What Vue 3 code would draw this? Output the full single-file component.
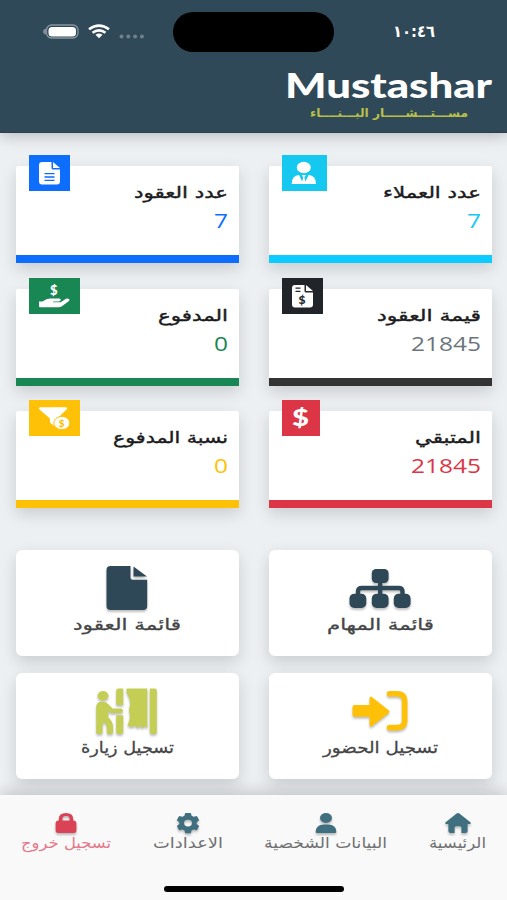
<script setup>
import { h } from "vue";

// One line of text drawn at a fixed width, anchored on its right edge.
const FitText = (props) =>
    h("svg", { width: props.width, height: props.height, fill: "currentColor" }, [
        h(
            "text",
            {
                x: props.width,
                y: props.baseline,
                textLength: props.width,
                lengthAdjust: "spacingAndGlyphs",
            },
            props.text,
        ),
    ]);
FitText.props = ["text", "width", "height", "baseline"];

const stats = [
    { id: "clients", title: "عدد العملاء", titleWidth: 98, value: "7", badge: 45 },
    { id: "contracts", title: "عدد العقود", titleWidth: 94, value: "7", badge: 41 },
    { id: "total", title: "قيمة العقود", titleWidth: 104, value: "21845", badge: 41 },
    { id: "paid", title: "المدفوع", titleWidth: 70, value: "0", badge: 51 },
    { id: "rest", title: "المتبقي", titleWidth: 66, value: "21845", badge: 38 },
    { id: "ratio", title: "نسبة المدفوع", titleWidth: 115, value: "0", badge: 51 },
];

const actions = [
    { id: "tasks", label: "قائمة المهام", width: 107 },
    { id: "list", label: "قائمة العقود", width: 108 },
    { id: "attend", label: "تسجيل الحضور", width: 115 },
    { id: "visit", label: "تسجيل زيارة", width: 93 },
];

const tabs = [
    { id: "home", label: "الرئيسية", width: 57 },
    { id: "profile", label: "البيانات الشخصية", width: 123 },
    { id: "settings", label: "الاعدادات", width: 70 },
    { id: "logout", label: "تسجيل خروج", width: 90 },
];
</script>

<template>
    <div class="screen" dir="rtl">
        <header class="header">
            <div class="status" dir="ltr">
                <svg class="status-icons" width="103" height="18">
                    <path d="M3 5.5Q0 6 0 8.5t3 3z" fill="#7d8c96" />
                    <rect x="3.5" y="2" width="31.5" height="13" rx="5" fill="none" stroke="#8795a0" stroke-width="1.3" />
                    <rect x="5.5" y="4" width="27.5" height="9.5" rx="3.5" fill="#fff" />
                    <g fill="none" stroke="#fff" stroke-width="2.6">
                        <path d="M46 6.3Q56 -1.2 66 6.3" />
                        <path d="M49.5 9.8Q56 4.8 62.5 9.8" />
                    </g>
                    <path d="M52.5 11.7Q56 9.2 59.5 11.7L56 15.3z" fill="#fff" />
                    <g fill="#70818c">
                        <circle cx="78.5" cy="13.5" r="2" />
                        <circle cx="85.3" cy="13.5" r="2" />
                        <circle cx="92.1" cy="13.5" r="2" />
                        <circle cx="98.9" cy="13.5" r="2" />
                    </g>
                </svg>
                <div class="island"></div>
                <FitText class="clock" text="١٠:٤٦" :width="42" :height="20" :baseline="16" />
            </div>
            <div class="brand">
                <FitText class="brand-name" text="Mustashar" :width="207" :height="34" :baseline="30" />
                <FitText class="brand-tag" text="مســـتـــشـــــار البـــنــــاء" :width="158" :height="18" :baseline="14.5" />
            </div>
        </header>

        <main class="content">
            <section class="stats">
                <article v-for="item in stats" :key="item.id" class="stat" :class="item.id">
                    <div class="badge" :style="{ width: item.badge + 'px' }">
                        <svg v-if="item.id === 'clients'" width="45" height="36" fill="#fff">
                            <ellipse cx="21.8" cy="12.5" rx="7" ry="5.8" />
                            <path d="M9.7 29Q9.7 20.5 17 20l3.2 6.5 1-4-1.4-2.5h4l-1.4 2.5 1 4 3.2-6.5q7.4.5 7.4 9z" />
                        </svg>
                        <svg v-else-if="item.id === 'contracts'" width="41" height="36">
                            <path fill="#fff" d="M13 7h9.5v6q0 1.5 1.5 1.5h7v12q0 3-3 3H13q-3 0-3-3V10q0-3 3-3zM24 7l7 6h-7z" />
                            <path d="M15.5 18.7h10M15.5 22h10M15.5 25.3h10" stroke="#0d6efd" stroke-width="1.3" />
                        </svg>
                        <svg v-else-if="item.id === 'total'" width="41" height="36">
                            <path fill="#fff" d="M13 7h9.5v6q0 1.5 1.5 1.5h7v12q0 3-3 3H13q-3 0-3-3V10q0-3 3-3zM24 7l7 6h-7z" />
                            <path d="M13.5 10.2h5M13.5 13.3h5" stroke="#212529" stroke-width="1.3" />
                            <text x="16.5" y="26.2" font-size="12" fill="#212529">$</text>
                        </svg>
                        <svg v-else-if="item.id === 'paid'" width="51" height="36" fill="#fff">
                            <text x="21" y="16.8" font-size="13">$</text>
                            <path d="M10 23.5h3.5q4-3 7.5-3h9q1.7 0 1.7 1.4t-2 1.6h-5.5v.7h7.5l5.3-3.4q1.6-.8 3 .2t-.3 2.3l-6.8 5q-1.4 1-3.5 1H11q-1 0-1-1z" />
                        </svg>
                        <svg v-else-if="item.id === 'rest'" width="38" height="36" fill="#fff">
                            <text x="10" y="25.8" font-size="23" textLength="17" lengthAdjust="spacingAndGlyphs">$</text>
                        </svg>
                        <svg v-else width="51" height="36">
                            <path fill="#fff" d="M11.5 7.3h25q2.5.4 1 2.2L28.8 18q-4.6 3.5-3.3 8l-3.6-2.4q-1-.8-1-2v-3L10.5 9.5q-1.5-1.8 1-2.2z" />
                            <ellipse cx="32.8" cy="23" rx="8" ry="6.6" fill="#fff" stroke="#ffc107" stroke-width="1" />
                            <text x="29.8" y="26.7" font-size="10" fill="#ffc107">$</text>
                        </svg>
                    </div>
                    <FitText class="stat-title" :text="item.title" :width="item.titleWidth" :height="28" :baseline="19.3" />
                    <FitText class="stat-value" :text="item.value" :width="item.value.length * 14" :height="28" :baseline="21" />
                </article>
            </section>

            <section class="actions">
                <article v-for="item in actions" :key="item.id" class="action">
                    <svg v-if="item.id === 'tasks'" class="action-icon" width="62" height="46" fill="#2f4858">
                        <rect x="22.8" y="4" width="16.8" height="14" rx="4.2" />
                        <rect x=".5" y="28.7" width="16.8" height="14.3" rx="4.8" />
                        <rect x="22.8" y="28.7" width="16.8" height="14.3" rx="4.8" />
                        <rect x="44.8" y="28.7" width="16.8" height="14.3" rx="4.8" />
                        <path d="M31.2 16v14M9 30v-3.5q0-3.5 4-3.5h36.5q4 0 4 3.5V30" fill="none" stroke="#2f4858" stroke-width="4.4" />
                    </svg>
                    <svg v-else-if="item.id === 'list'" class="action-icon" width="62" height="46" fill="#2f4858">
                        <path d="M14.5 1h20v11.2q0 2.5 2.5 2.5h14.2V41q0 4-4 4H14.5q-4 0-4-4V5q0-4 4-4z" />
                        <path d="M37.5 1.5 51 11.5H37.5z" />
                    </svg>
                    <svg v-else-if="item.id === 'attend'" class="action-icon" width="62" height="46" fill="#ffc107">
                        <path d="M5.5 17h15v-6.5q0-3 2.7-1.3l16.6 13q1.4 1.3 0 2.8L23.2 38q-2.7 1.7-2.7-1.3v-8h-15q-2 0-2-2V19q0-2 2-2z" />
                        <path d="M40.5 5.8H48q7.6 0 7.6 6.7V33q0 6.6-7.6 6.6h-7.5" fill="none" stroke="#ffc107" stroke-width="5.6" stroke-linecap="round" />
                    </svg>
                    <svg v-else class="action-icon" width="62" height="46" fill="#c4ce54">
                        <ellipse cx="7" cy="7.7" rx="5.5" ry="4.7" />
                        <path d="M.2 19q0-5.3 6-5.3 4 0 6 2.4l4.3 4.4h7.8q2.7 0 2.7 2.3T24.2 25h-9l-2.9-2v6.5q4.8 3.5 4.8 10.5v4.4q0 1.6-1.6 1.6h-3q-1.7 0-1.7-1.6V40q0-4-3.2-6.3-1.1 3-1.1 6.3v4.4Q6.5 46 5 46H1.8Q.2 46 .2 44.4z" />
                        <path d="M22.2.5h5V17h-7V2.3Q20.2.5 22.2.5zM20.2 27.3h7v17q0 1.7-1.6 1.7h-3.8q-1.6 0-1.6-1.7z" />
                        <path d="M30.5.5h20.8V40l-2.4-2-2.6 2-2.2-2-2.5 2-2.6-2.7-2.6 1.8-5.1-1.5q4.2-8 1.5-15.6 2-5 1-9.5-.8-4-3.3-8z" />
                        <path d="M53.8.5h5q2 0 2 1.8v42q0 1.7-2 1.7h-3.3q-1.7 0-1.7-1.7z" />
                    </svg>
                    <FitText class="action-label" :text="item.label" :width="item.width" :height="30" :baseline="19" />
                </article>
            </section>
        </main>

        <nav class="tabbar">
            <a v-for="tab in tabs" :key="tab.id" class="tab" :class="tab.id">
                <svg v-if="tab.id === 'home'" class="tab-icon" width="28" height="22">
                    <path d="M14 1Q15 1 16 2l10.4 8.2q1.2 1.6-.8 1.8h-2v7q0 2-2 2h-4.2v-5.2q0-1.5-1.5-1.5h-3.8q-1.5 0-1.5 1.5V21H6.4q-2 0-2-2v-7h-2q-2-.2-.8-1.8L12 2q1-1 2-1z" />
                </svg>
                <svg v-else-if="tab.id === 'profile'" class="tab-icon" width="28" height="22">
                    <ellipse cx="14" cy="6" rx="6" ry="5" />
                    <path d="M3.7 20q.2-7.5 8-7.5h4.6q7.8 0 8 7.5 0 1-1.2 1H5q-1.3 0-1.3-1z" />
                </svg>
                <svg v-else-if="tab.id === 'settings'" class="tab-icon" width="28" height="22">
                    <path fill-rule="evenodd" d="M11.2 1h5.6l.8 2.8 2 1 3.3-.8 2.3 4.2-2.5 2v1.8l2.5 2-2.3 4.2-3.3-.8-2 1-.8 2.8h-5.6l-.8-2.8-2-1-3.3.8L2.8 14l2.5-2v-1.8l-2.5-2L5.1 4l3.3.8 2-1zM14 7.7a4 3.4 0 1 0 0 6.8 4 3.4 0 1 0 0-6.8z" />
                </svg>
                <svg v-else class="tab-icon" width="28" height="22">
                    <path fill-rule="evenodd" d="M6.8 8.5V7Q6.8 1 14 1t7.2 6v1.5q3.2 0 3.2 2.5v7.5q0 2.5-3 2.5H6.6q-3 0-3-2.5V11q0-2.5 3.2-2.5zm3.6 0h7.2V7q0-3-3.6-3t-3.6 3z" />
                </svg>
                <FitText :text="tab.label" :width="tab.width" :height="26" :baseline="14" />
            </a>
            <div class="home-bar"></div>
        </nav>
    </div>
</template>

<style>
body {
    margin: 0;
}
</style>

<style scoped>
.screen {
    display: flex;
    flex-direction: column;
    width: 507px;
    height: 900px;
    overflow: hidden;
    background: #edf0f3;
    font-family: "DejaVu Sans", sans-serif;
}

svg {
    display: block;
    flex: none;
    overflow: visible;
}

.header {
    flex: none;
    height: 133px;
    box-sizing: border-box;
    padding-top: 12px;
    border-bottom: 1px solid #2c3f4c;
    background: #304958;
    box-shadow: 0 3px 14px rgba(0, 0, 0, 0.22);
}

.status {
    display: flex;
    align-items: flex-start;
    padding-left: 43px;
}

.status-icons {
    margin-top: 11px;
}

.island {
    width: 161px;
    height: 40px;
    margin-left: 27px;
    border-radius: 20px;
    background: #000;
}

.clock {
    display: block;
    overflow: visible;
    margin: 9px 0 0 59px;
    direction: rtl;
    color: #fff;
    font-size: 16px;
    font-weight: bold;
}

.brand {
    display: flex;
    flex-direction: column;
    align-items: flex-start;
    margin-top: 16px;
    padding-right: 15px;
}

.brand-name {
    color: #fff;
    font-family: Lato, sans-serif;
    font-size: 34px;
    font-weight: 900;
}

.brand-tag {
    margin-right: 24px;
    color: #b8c04a;
    font-size: 12px;
    font-weight: bold;
}

.content {
    flex: 1;
    padding: 33px 15.5px 0 16px;
}

.stats,
.actions {
    display: grid;
    grid-template-columns: 1fr 1fr;
    column-gap: 30.5px;
}

.stats {
    row-gap: 25.5px;
}

.stat {
    position: relative;
    display: flex;
    flex-direction: column;
    height: 97px;
    box-sizing: border-box;
    padding: 13px 11px 0;
    border-bottom: 8px solid;
    border-radius: 2px 2px 0 0;
    background: #fff;
    box-shadow: 0 6px 16px rgba(0, 0, 0, 0.15);
}

.badge {
    position: absolute;
    top: -11px;
    left: 13px;
    height: 36px;
    background: currentColor;
    font-family: Lato, sans-serif;
    font-weight: 900;
    direction: ltr;
}

.stat-title {
    color: #1b1b1d;
    font-size: 16px;
    stroke: currentColor;
    stroke-width: 0.4px;
}

.stat-value {
    font-family: "Open Sans", sans-serif;
    font-size: 20px;
    font-weight: 500;
}

.clients {
    border-color: #0dcaff;
    color: #15c8ef;
}

.contracts {
    border-color: #0d6efd;
    color: #0d6efd;
}

.total {
    border-color: #333;
    color: #6c757d;
}

.total .badge {
    background: #212529;
}

.paid {
    border-color: #198754;
    color: #198754;
}

.rest {
    border-color: #dc3545;
    color: #dc3545;
}

.ratio {
    border-color: #ffc107;
    color: #ffc107;
}

.actions {
    row-gap: 16.5px;
    margin-top: 42px;
}

.action {
    display: flex;
    flex-direction: column;
    align-items: center;
    height: 106px;
    box-sizing: border-box;
    padding-top: 15px;
    border-radius: 6px;
    background: #fff;
    box-shadow: 0 6px 16px rgba(0, 0, 0, 0.15);
}

.action-icon,
.tab-icon {
    filter: drop-shadow(0 2px 1px rgba(0, 0, 0, 0.25));
}

.action-label {
    color: #454547;
    font-size: 16px;
    stroke: currentColor;
    stroke-width: 0.3px;
}

.tabbar {
    position: relative;
    display: flex;
    flex: none;
    justify-content: space-between;
    height: 105px;
    box-sizing: border-box;
    padding: 17px 21px 0;
    background: #f9f9f9;
    box-shadow: 0 -3px 14px rgba(0, 0, 0, 0.18);
}

.tab {
    display: flex;
    flex-direction: column;
    align-items: center;
    color: #707072;
    font-size: 15px;
}

.tab-icon {
    fill: #40707f;
}

.logout {
    color: #e5788a;
}

.logout .tab-icon {
    fill: #d94355;
}

.home-bar {
    position: absolute;
    bottom: 8px;
    left: 164px;
    width: 180px;
    height: 6px;
    border-radius: 3px;
    background: #000;
}
</style>
